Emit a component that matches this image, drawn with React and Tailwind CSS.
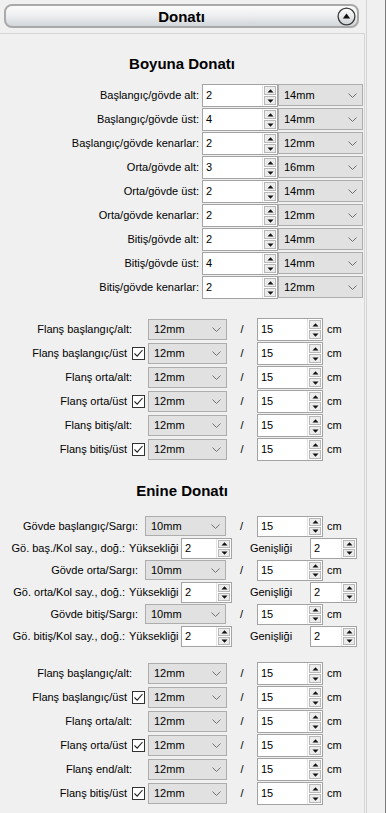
import React from "react"

const boyuna = [
  ["Başlangıç/gövde alt:", "2", "14mm"],
  ["Başlangıç/gövde üst:", "4", "14mm"],
  ["Başlangıç/gövde kenarlar:", "2", "12mm"],
  ["Orta/gövde alt:", "3", "16mm"],
  ["Orta/gövde üst:", "2", "14mm"],
  ["Orta/gövde kenarlar:", "2", "12mm"],
  ["Bitiş/gövde alt:", "2", "14mm"],
  ["Bitiş/gövde üst:", "4", "14mm"],
  ["Bitiş/gövde kenarlar:", "2", "12mm"],
]

const flans1 = [
  ["Flanş başlangıç/alt:", false],
  ["Flanş başlangıç/üst", true],
  ["Flanş orta/alt:", false],
  ["Flanş orta/üst", true],
  ["Flanş bitiş/alt:", false],
  ["Flanş bitiş/üst", true],
]

const flans2 = [
  ["Flanş başlangıç/alt:", false],
  ["Flanş başlangıç/üst", true],
  ["Flanş orta/alt:", false],
  ["Flanş orta/üst", true],
  ["Flanş end/alt:", false],
  ["Flanş bitiş/üst", true],
]

const enine = [
  ["Gövde başlangıç/Sargı:", "Gö. baş./Kol say., doğ.:"],
  ["Gövde orta/Sargı:", "Gö. orta/Kol say., doğ.:"],
  ["Gövde bitiş/Sargı:", "Gö. bitiş/Kol say., doğ.:"],
]

const Arrow = ({ down }) => (
  <svg width="7" height="4" viewBox="0 0 7 4">
    {down ? <polygon points="0.5,0.5 6.5,0.5 3.5,3.8" fill="#111" /> : <polygon points="0.5,3.5 6.5,3.5 3.5,0.2" fill="#111" />}
  </svg>
)

// numeric up/down box
const Spin = ({ value, className }) => (
  <div className={`flex border border-[#a3a3a3] bg-white ${className}`}>
    <div className="flex-1 flex items-center pl-[3px] border-r border-[#e3e3e3]">{value}</div>
    <div className="w-[14px] flex flex-col gap-[1px] p-[1px] bg-white">
      <div className="flex-1 flex items-center justify-center bg-[#ececec] border border-[#b8b8b8]">
        <Arrow />
      </div>
      <div className="flex-1 flex items-center justify-center bg-[#ececec] border border-[#b8b8b8]">
        <Arrow down />
      </div>
    </div>
  </div>
)

const Combo = ({ value, className }) => (
  <div className={`flex items-center justify-between pl-[5px] pr-[5px] bg-[#e1e1e1] border border-[#adadad] ${className}`}>
    <span>{value}</span>
    <svg width="9" height="5" viewBox="0 0 9 5">
      <polyline points="0.5,0.5 4.5,4.5 8.5,0.5" fill="none" stroke="#707070" strokeWidth="1" />
    </svg>
  </div>
)

const Check = () => (
  <div className="w-[13px] h-[13px] ml-[5px] border border-[#333] bg-white flex items-center justify-center">
    <svg width="11" height="11" viewBox="0 0 11 11">
      <polyline points="1.5,5.5 4.2,8.2 9.5,2" fill="none" stroke="#222" strokeWidth="1.1" />
    </svg>
  </div>
)

const FlansRow = ({ label, check }) => (
  <div className="flex items-start h-[24px]">
    <div className={`w-[146px] h-[23px] flex items-center justify-end ${check ? "pr-[1px]" : "pr-[14px]"}`}>
      <span>{label}</span>
      {check && <Check />}
    </div>
    <Combo value="12mm" className="w-[79px] h-[21px] ml-[2px] mt-[1px]" />
    <div className="w-[30px] h-[23px] flex items-center justify-center">/</div>
    <Spin value="15" className="w-[66px] h-[23px]" />
    <div className="h-[23px] flex items-center ml-[4px]">cm</div>
  </div>
)

export default function App() {
  return (
    <div className="w-[386px] h-[813px] bg-[#f0f0f0] flex overflow-hidden text-[11px] leading-[13px] text-black font-['Liberation_Sans',Arial,sans-serif]">
      <div className="w-[365px] flex flex-col">
        {/* header bar */}
        <div className="h-[33px] pt-[4px] pl-[4px] pr-[6px]">
          <div className="h-[24px] flex items-center rounded-[8px] border-2 border-[#a9a9a9] bg-gradient-to-b from-[#fbfbfb] via-[#eceef0] to-[#d2d6da] pl-[1px] pr-[1px]">
            <div className="w-[19px]" />
            <div className="flex-1 text-center font-bold text-[15px] leading-[17px]">Donatı</div>
            <svg width="19" height="19" viewBox="0 0 19 19">
              <defs>
                <linearGradient id="cg" x1="0" y1="0" x2="0" y2="1">
                  <stop offset="0" stopColor="#ffffff" />
                  <stop offset="1" stopColor="#cfd3d7" />
                </linearGradient>
              </defs>
              <circle cx="9.5" cy="9.5" r="8.4" fill="url(#cg)" stroke="#3a3a3a" strokeWidth="1.3" />
              <polygon points="5.8,11.5 13.2,11.5 9.5,6.6" fill="#111" />
            </svg>
          </div>
        </div>

        {/* content panel */}
        <div className="flex-1 border-t border-r border-[#d5d5d5] pt-[21px]">
          <div className="text-center font-bold text-[15px] leading-[17px]">Boyuna Donatı</div>

          <div className="mt-[12px] flex flex-col">
            {boyuna.map(([label, n, mm]) => (
              <div key={label} className="flex items-start h-[24px]">
                <div className="w-[202px] h-[23px] pr-[3px] flex items-center justify-end">{label}</div>
                <Spin value={n} className="w-[76px] h-[23px]" />
                <Combo value={mm} className="w-[85px] h-[22px]" />
              </div>
            ))}
          </div>

          <div className="mt-[18px] flex flex-col">
            {flans1.map(([label, check]) => (
              <FlansRow key={label} label={label} check={check} />
            ))}
          </div>

          <div className="mt-[20px] text-center font-bold text-[15px] leading-[17px]">Enine Donatı</div>

          <div className="mt-[16px] flex flex-col">
            {enine.map(([sargi, kol]) => (
              <React.Fragment key={sargi}>
                <div className="flex items-center h-[22px]">
                  <div className="w-[145px] pr-[7px] text-right">{sargi}</div>
                  <Combo value="10mm" className="w-[81px] h-[20px]" />
                  <div className="w-[31px] text-center">/</div>
                  <Spin value="15" className="w-[66px] h-[21px]" />
                  <div className="ml-[4px]">cm</div>
                </div>
                <div className="flex items-center h-[22px]">
                  <div className="w-[128px] pr-[3px] text-right">{kol}</div>
                  <div className="w-[53px] pl-[1px]">Yüksekliği</div>
                  <Spin value="2" className="w-[51px] h-[21px]" />
                  <div className="w-[78px] text-center">Genişliği</div>
                  <Spin value="2" className="w-[47px] h-[21px]" />
                </div>
              </React.Fragment>
            ))}
          </div>

          <div className="mt-[15px] flex flex-col">
            {flans2.map(([label, check]) => (
              <FlansRow key={label} label={label} check={check} />
            ))}
          </div>
        </div>
      </div>
      <div className="w-[1px]" />
      <div className="w-[1px] bg-[#d5d5d5]" />
      <div className="flex-1" />
      <div className="w-[1px] bg-[#7a7a7a]" />
    </div>
  )
}
